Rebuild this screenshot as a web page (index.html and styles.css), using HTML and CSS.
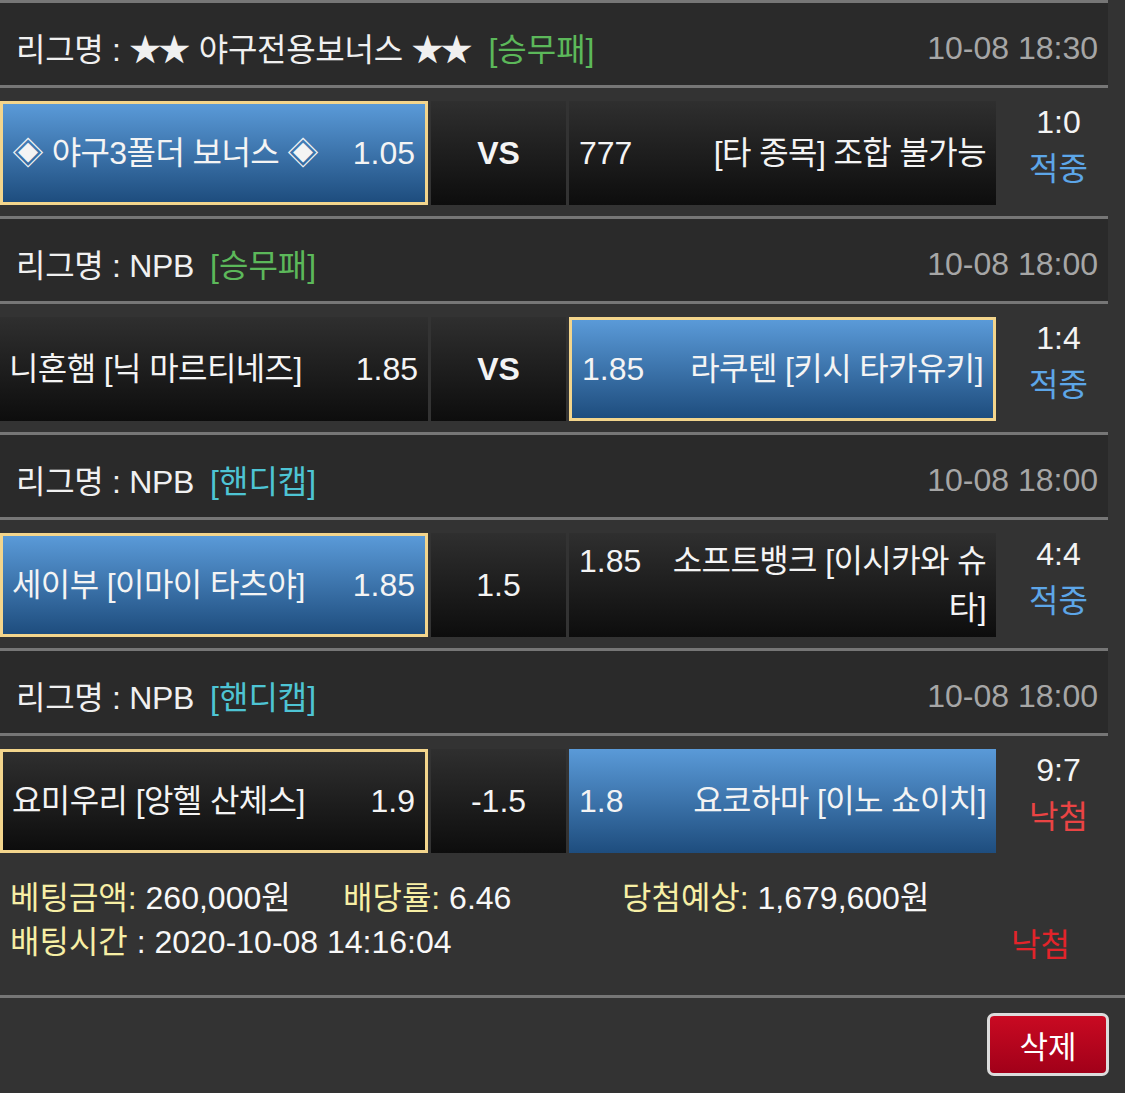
FILE: index.html
```html
<!DOCTYPE html>
<html lang="ko">
<head>
<meta charset="utf-8">
<title>베팅내역</title>
<link rel="stylesheet" href="styles.css">
</head>
<body>
<div class="page">
  <div class="list">
    <section class="game">
      <div class="league">
        <span class="lg-name">리그명 : <span class="stars">★★</span> 야구전용보너스 <span class="stars">★★</span></span>
        <span class="type wdl">[승무패]</span>
        <span class="time">10-08 18:30</span>
      </div>
      <div class="match">
        <div class="cell side home blue picked"><div class="inner"><span class="odd">1.05</span>◈ 야구3폴더 보너스 ◈</div></div>
        <div class="cell mid bold">VS</div>
        <div class="cell side away"><div class="inner"><span class="odd">777</span>[타 종목] 조합 불가능</div></div>
        <div class="result"><div class="score">1:0</div><div class="status hit">적중</div></div>
      </div>
    </section>

    <section class="game">
      <div class="league">
        <span class="lg-name">리그명 : NPB</span>
        <span class="type wdl">[승무패]</span>
        <span class="time">10-08 18:00</span>
      </div>
      <div class="match">
        <div class="cell side home"><div class="inner"><span class="odd">1.85</span>니혼햄 [닉 마르티네즈]</div></div>
        <div class="cell mid bold">VS</div>
        <div class="cell side away blue picked"><div class="inner"><span class="odd">1.85</span>라쿠텐 [키시 타카유키]</div></div>
        <div class="result"><div class="score">1:4</div><div class="status hit">적중</div></div>
      </div>
    </section>

    <section class="game">
      <div class="league">
        <span class="lg-name">리그명 : NPB</span>
        <span class="type handi">[핸디캡]</span>
        <span class="time">10-08 18:00</span>
      </div>
      <div class="match">
        <div class="cell side home blue picked"><div class="inner"><span class="odd">1.85</span>세이부 [이마이 타츠야]</div></div>
        <div class="cell mid">1.5</div>
        <div class="cell side away"><div class="inner"><span class="odd">1.85</span>소프트뱅크 [이시카와 슈타]</div></div>
        <div class="result"><div class="score">4:4</div><div class="status hit">적중</div></div>
      </div>
    </section>

    <section class="game">
      <div class="league">
        <span class="lg-name">리그명 : NPB</span>
        <span class="type handi">[핸디캡]</span>
        <span class="time">10-08 18:00</span>
      </div>
      <div class="match">
        <div class="cell side home picked"><div class="inner"><span class="odd">1.9</span>요미우리 [앙헬 산체스]</div></div>
        <div class="cell mid">-1.5</div>
        <div class="cell side away blue"><div class="inner"><span class="odd">1.8</span>요코하마 [이노 쇼이치]</div></div>
        <div class="result"><div class="score">9:7</div><div class="status miss">낙첨</div></div>
      </div>
    </section>
  </div>

  <div class="summary">
    <div class="item"><span class="label">베팅금액:</span> 260,000원</div>
    <div class="item"><span class="label">배당률:</span> 6.46</div>
    <div class="item"><span class="label">당첨예상:</span> 1,679,600원</div>
    <div class="item wide"><span class="label">배팅시간</span> : 2020-10-08 14:16:04</div>
    <div class="item final">낙첨</div>
  </div>

  <div class="actions">
    <button class="delete" type="button">삭제</button>
  </div>
</div>
</body>
</html>
```

FILE: styles.css
```css
* { box-sizing: border-box; }

html, body {
  margin: 0;
  padding: 0;
  background: #333333;
}

body {
  font-family: "Liberation Sans", "Noto Sans CJK KR", sans-serif;
  font-size: 32px;
  color: #f2f2f2;
}

.page {
  width: 1125px;
}

.list {
  width: 1108px;
}

.game {
  border-top: 3px solid #767676;
}

.league {
  height: 85px;
  background: #2a2a2a;
  border-bottom: 3px solid #767676;
  display: flex;
  align-items: center;
  padding: 5px 10px 0 16px;
  white-space: nowrap;
}

.lg-name {
  color: #f0f0f0;
  letter-spacing: -0.3px;
}

.stars { letter-spacing: -3px; margin-right: 3px; }

.type { margin-left: 16px; }
.type.wdl { color: #5cb85a; }
.type.handi { color: #4ec4d4; }

.time {
  margin-left: auto;
  color: #a6a6a6;
  position: relative;
  top: 2px;
}

.match {
  height: 128px;
  padding: 13px 0 11px;
  display: flex;
  gap: 3px;
  background: #333333;
}

.cell {
  height: 104px;
  background: linear-gradient(#2f2f2f, #0d0d0d);
  display: flex;
  align-items: center;
  line-height: 47px;
  color: #f4f4f4;
}

.cell.side { width: 427px; padding: 0 10px; }
.cell.home { width: 428px; padding: 0 10px 0 9px; }

.cell.mid {
  width: 135px;
  justify-content: center;
}

.cell.bold { font-weight: bold; }

.cell.blue {
  background: linear-gradient(#5a9ad8, #1e4d7e);
}

.cell.picked {
  border: 3px solid #f3d58c;
}

.inner {
  width: 100%;
  letter-spacing: -0.6px;
}

.odd { letter-spacing: 0; }

.home .inner { text-align: left; }
.home .odd { float: right; }

.away .inner { text-align: right; word-break: break-all; }
.away .odd { float: left; margin-right: 24px; }

.result {
  flex: 1;
  height: 104px;
  display: flex;
  flex-direction: column;
  align-items: center;
  padding-left: 10px;
  line-height: 47px;
  margin-top: -2px;
}

.score { color: #f4f4f4; }
.status.hit { color: #5da6e8; }
.status.miss { color: #ea4444; }

.summary {
  height: 131px;
  padding: 12px 0 0 10px;
  display: grid;
  grid-template-columns: 333px 279px 1fr;
  align-content: start;
  line-height: 44px;
  color: #f8f8f8;
  white-space: nowrap;
}

.label { color: #f7efa5; }

.item.wide { grid-column: 1 / 3; }

.item.final {
  justify-self: end;
  margin-right: 55px;
  margin-top: 3px;
  color: #e2242a;
}

.actions {
  border-top: 3px solid #767676;
  height: 98px;
  display: flex;
  justify-content: flex-end;
  align-items: flex-start;
  padding: 15px 16px 0 0;
}

.delete {
  width: 122px;
  height: 63px;
  border: 3px solid #dcdcdc;
  border-radius: 7px;
  background: linear-gradient(#c90a22, #a10019);
  color: #ffffff;
  font-family: "Liberation Sans", "Noto Sans CJK KR", sans-serif;
  font-size: 31px;
  padding: 0;
}
```
